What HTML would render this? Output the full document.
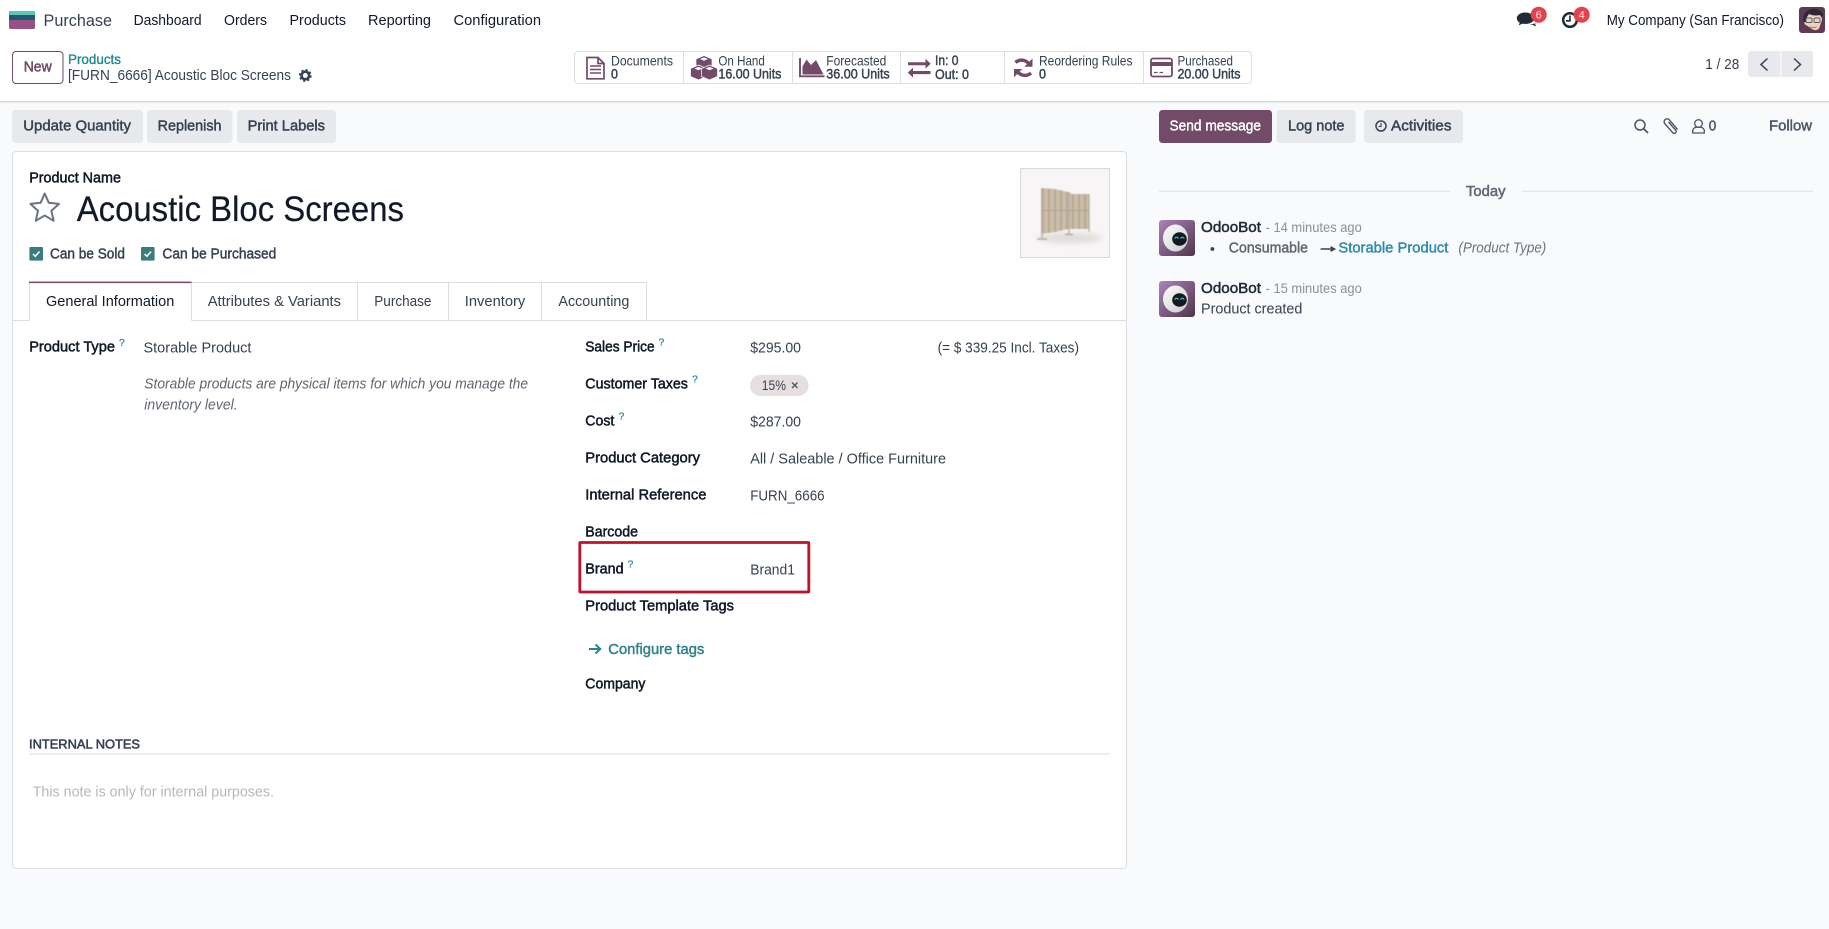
<!DOCTYPE html>
<html lang="en"><head><meta charset="utf-8"><title>Acoustic Bloc Screens</title>
<style>
html,body{margin:0;padding:0;width:1829px;height:929px;overflow:hidden;background:#f9fafb}
svg{display:block}
text{font-family:"Liberation Sans",sans-serif;font-size:14.8px;fill:#374151;white-space:pre}
.m{stroke:#374151;stroke-width:.45px}
.k{fill:#111827}
.km{fill:#111827;stroke:#111827;stroke-width:.5px}
.s{font-size:13.8px}
.p{fill:#714B67}
.q{font-size:10.5px;fill:#2f8a9c;stroke:#2f8a9c;stroke-width:.25px}
.t{fill:#1f8a8e;stroke:#1f8a8e;stroke-width:.35px}
.g{fill:#8b9097}
</style></head><body>
<svg width="1829" height="929" viewBox="0 0 1829 929" xmlns="http://www.w3.org/2000/svg">
<defs>
<linearGradient id="av" x1="0" y1="0" x2="1" y2="1"><stop offset="0" stop-color="#ab84bd"/><stop offset="1" stop-color="#50354a"/></linearGradient>
<linearGradient id="head" x1="0" y1="0" x2="1" y2="1"><stop offset="0" stop-color="#fff"/><stop offset="1" stop-color="#c9c9c9"/></linearGradient>
<pattern id="slat" width="6" height="10" patternUnits="userSpaceOnUse"><rect width="6" height="10" fill="#cbbda9"/><rect x="4" width="2" height="10" fill="#b8a994"/></pattern>
<filter id="b1" x="-20%" y="-20%" width="140%" height="140%"><feGaussianBlur stdDeviation=".55"/></filter>
<filter id="b2" x="-30%" y="-100%" width="160%" height="300%"><feGaussianBlur stdDeviation="3"/></filter>
<filter id="b3" x="-20%" y="-20%" width="140%" height="140%"><feGaussianBlur stdDeviation=".35"/></filter>
</defs>

<!-- top area -->
<rect width="1829" height="101" fill="#fff"/>
<rect y="101" width="1829" height="1.5" fill="#d8dadd"/>

<!-- logo -->
<rect x="9" y="11" width="26" height="18" rx="1.5" fill="#985184"/>
<path d="M9 12.5a1.500 1.500 0 0 1 1.500-1.500h23a1.500 1.500 0 0 1 1.500 1.500V15H9z" fill="#5cc8b4"/>
<rect x="9" y="15" width="26" height="5" fill="#1f5a72"/>

<text x="43.5" y="25.8" style="font-size:16.5px" textLength="68.5" lengthAdjust="spacingAndGlyphs">Purchase</text>
<text class="k" x="133.6" y="25" textLength="68" lengthAdjust="spacingAndGlyphs">Dashboard</text>
<text class="k" x="224" y="25" textLength="43" lengthAdjust="spacingAndGlyphs">Orders</text>
<text class="k" x="289.5" y="25" textLength="56.5" lengthAdjust="spacingAndGlyphs">Products</text>
<text class="k" x="368" y="25" textLength="63" lengthAdjust="spacingAndGlyphs">Reporting</text>
<text class="k" x="453.5" y="25" textLength="87.5" lengthAdjust="spacingAndGlyphs">Configuration</text>

<!-- systray -->
<path d="M1525.500 12.500c-4.800 0-8.700 2.500-8.700 5.700 0 1.900 1.200 3.400 3 4.500l-1.100 2.700 3.700-1.800c1 .2 2 .3 3.100.3 4.800 0 8.700-2.500 8.700-5.700s-3.900-5.700-8.700-5.700z" fill="#1f2937"/>
<path d="M1530 24.700c1.100.3 2.100.4 3.100.3l2.900 1.500-.9-2.700c.6-.4 1.100-1 1.400-1.500-1.500 1.400-3.800 2.200-6.500 2.400z" fill="#1f2937"/>
<circle cx="1538.700" cy="14.700" r="8" fill="#e4404e"/>
<text x="1538.700" y="18.600" text-anchor="middle" style="font-size:11px;fill:#fde8ea">6</text>
<circle cx="1570" cy="20" r="6.800" fill="#fff" stroke="#1f2937" stroke-width="2.500"/>
<path d="M1570 15.500V20.800H1566" fill="none" stroke="#1f2937" stroke-width="1.600"/>
<circle cx="1581.700" cy="14.700" r="8" fill="#e4404e"/>
<text x="1581.700" y="18.600" text-anchor="middle" style="font-size:11px;fill:#fde8ea">4</text>
<text class="k" x="1606.700" y="25" textLength="177.300" lengthAdjust="spacingAndGlyphs">My Company (San Francisco)</text>
<!-- user avatar -->
<rect x="1799" y="7" width="26" height="26" rx="3" fill="#5f3a56"/>
<g filter="url(#b3)">
<path d="M1804.500 24c-.5-7 2-12 8.500-13 5.500-1 9 2.500 9 9l-3 8.500c-2 2-5 2-7 .5z" fill="#f0d2b8"/>
<path d="M1803.500 22c-1.500-8 3-12.500 9-13 5.500-.5 10 2 10.500 6l-1.500 2.500-1.500-2.500c-4 .8-8 .6-11-1l-2 3-1 5z" fill="#2b2c33"/>
<rect x="1806" y="18" width="6" height="4.500" rx="1" fill="#d5d7d2" stroke="#5a5a5a" stroke-width=".9"/>
<rect x="1814" y="18" width="6" height="4.500" rx="1" fill="#d5d7d2" stroke="#5a5a5a" stroke-width=".9"/>
<path d="M1810 26.800q3.500 1.700 6.500 0" fill="none" stroke="#a8705f" stroke-width=".9"/>
</g>

<!-- breadcrumb row -->
<rect x="12.500" y="51.500" width="50.500" height="32" rx="3.500" fill="#fff" stroke="#714B67"/>
<text class="p" x="23.700" y="71.500" textLength="28" lengthAdjust="spacingAndGlyphs" style="stroke:#714B67;stroke-width:.5px">New</text>
<text class="t s" x="68" y="64" textLength="53" lengthAdjust="spacingAndGlyphs">Products</text>
<text x="68" y="80" textLength="223" lengthAdjust="spacingAndGlyphs">[FURN_6666] Acoustic Bloc Screens</text>
<circle cx="305.300" cy="75.500" r="3.800" fill="none" stroke="#374151" stroke-width="2.600"/>
<circle cx="305.300" cy="75.500" r="5.500" fill="none" stroke="#374151" stroke-width="1.800" stroke-dasharray="2.200 2.120"/>

<!-- stat buttons -->
<rect x="574.500" y="51.500" width="677" height="32" rx="3.500" fill="#fff" stroke="#dcdee1"/>
<path d="M683.500 52V83M792.500 52V83M900.500 52V83M1004.500 52V83M1143.500 52V83" stroke="#dcdee1"/>
<text class="s" x="611" y="65.500" textLength="62" lengthAdjust="spacingAndGlyphs">Documents</text>
<text class="s m" x="611" y="78.700" textLength="7" lengthAdjust="spacingAndGlyphs">0</text>
<text class="s" x="718.400" y="65.500" textLength="46.400" lengthAdjust="spacingAndGlyphs">On Hand</text>
<text class="s m" x="718.400" y="78.700" textLength="63" lengthAdjust="spacingAndGlyphs">16.00 Units</text>
<text class="s" x="826.300" y="65.500" textLength="60" lengthAdjust="spacingAndGlyphs">Forecasted</text>
<text class="s m" x="826.300" y="78.700" textLength="63.400" lengthAdjust="spacingAndGlyphs">36.00 Units</text>
<text class="s m" x="935" y="65" textLength="23.500" lengthAdjust="spacingAndGlyphs">In: 0</text>
<text class="s m" x="935" y="79" textLength="34" lengthAdjust="spacingAndGlyphs">Out: 0</text>
<text class="s" x="1039" y="65.500" textLength="93.500" lengthAdjust="spacingAndGlyphs">Reordering Rules</text>
<text class="s m" x="1039" y="78.700" textLength="7" lengthAdjust="spacingAndGlyphs">0</text>
<text class="s" x="1177.500" y="65.500" textLength="55.500" lengthAdjust="spacingAndGlyphs">Purchased</text>
<text class="s m" x="1177.500" y="78.700" textLength="63" lengthAdjust="spacingAndGlyphs">20.00 Units</text>
<!-- doc -->
<path d="M587 57.500H598L604 63.500V78.800H587zM598 57.500V63.500H604" fill="none" stroke="#714B67" stroke-width="1.700"/>
<path d="M590 66H601M590 69.500H601M590 73H601" stroke="#714B67" stroke-width="1.600"/>
<!-- cubes -->
<g fill="#714B67" stroke="#fff" stroke-width=".7">
<path d="M704 55.500L712 59V67L704 70.500L696 67V59z"/>
<path d="M698.500 65L706.500 68.500V76.500L698.500 80L690.500 76.500V68.500z"/>
<path d="M709.500 65L717.500 68.500V76.500L709.500 80L701.500 76.500V68.500z"/>
</g>
<path d="M700 59L704 57.400L708 59L704 60.700z M694.500 68.500L698.500 66.900L702.500 68.500L698.500 70.200z M705.500 68.500L709.500 66.900L713.500 68.500L709.500 70.200z" fill="#fff"/>
<!-- area chart -->
<path d="M800 58V76.300H824.500" fill="none" stroke="#714B67" stroke-width="1.900"/>
<path d="M802.500 74.500V66.500L806.500 59.500L811 65L816 60L823.500 74.500z" fill="#714B67"/>
<!-- exchange -->
<path d="M908 62.200H925.500V58.800L930.700 63.700L925.500 68.600V65.300H908z" fill="#714B67"/>
<path d="M930.500 71H913V67.700L907.800 72.600L913 77.500V74.100H930.500z" fill="#714B67"/>
<!-- refresh -->
<path d="M1030 66A9 9 0 0 0 1015.500 62.500" fill="none" stroke="#714B67" stroke-width="3.400"/>
<path d="M1032.500 58.500V66.800H1024.300z" fill="#714B67"/>
<path d="M1016.500 69.500A9 9 0 0 0 1031 73" fill="none" stroke="#714B67" stroke-width="3.400"/>
<path d="M1014 77.200V69H1022.200z" fill="#714B67"/>
<!-- card -->
<rect x="1151" y="58.500" width="21" height="18" rx="2" fill="none" stroke="#714B67" stroke-width="1.800"/>
<rect x="1151" y="62" width="21" height="4" fill="#714B67"/>
<path d="M1154 72.500H1157.500M1159.500 72.500H1163" stroke="#714B67" stroke-width="1.300"/>

<!-- pager -->
<text x="1705.300" y="69" textLength="34" lengthAdjust="spacingAndGlyphs">1 / 28</text>
<path d="M1751 51H1780.300V77H1751a3 3 0 0 1-3-3V54a3 3 0 0 1 3-3z" fill="#e7e9ed"/>
<path d="M1781.300 51H1810a3 3 0 0 1 3 3V74a3 3 0 0 1-3 3H1781.300z" fill="#e7e9ed"/>
<path d="M1767.500 58.500L1761 64.500L1767.500 70.500M1794 58.500L1800.500 64.500L1794 70.500" fill="none" stroke="#374151" stroke-width="1.500"/>

<!-- action buttons -->
<rect x="12" y="110" width="131" height="33" rx="3.500" fill="#e7e9ed"/>
<rect x="147" y="110" width="85.500" height="33" rx="3.500" fill="#e7e9ed"/>
<rect x="237" y="110" width="99" height="33" rx="3.500" fill="#e7e9ed"/>
<text class="m" x="23.300" y="130.700" textLength="107.700" lengthAdjust="spacingAndGlyphs">Update Quantity</text>
<text class="m" x="157.600" y="130.700" textLength="63.900" lengthAdjust="spacingAndGlyphs">Replenish</text>
<text class="m" x="247.600" y="130.700" textLength="77.400" lengthAdjust="spacingAndGlyphs">Print Labels</text>

<!-- form card -->
<rect x="12.500" y="151.500" width="1114" height="717" rx="3.500" fill="#fff" stroke="#dcdee1"/>
<text class="km" x="29.200" y="182.700" textLength="91.800" lengthAdjust="spacingAndGlyphs">Product Name</text>
<path d="M44.700 193.500L48.800 202.800L59 203.900L51.400 210.700L53.600 220.800L44.700 215.500L35.800 220.800L38 210.700L30.400 203.900L40.600 202.800z" fill="none" stroke="#6b7280" stroke-width="2" stroke-linejoin="round"/>
<text class="k" x="76.700" y="221" style="font-size:35px;stroke:#111827;stroke-width:.2px" textLength="327.300" lengthAdjust="spacingAndGlyphs">Acoustic Bloc Screens</text>

<rect x="29.400" y="247" width="13.600" height="13.600" rx="1" fill="#3a7d80"/>
<path d="M33 254L35.300 256.300L39.500 251.500" fill="none" stroke="#fff" stroke-width="1.500"/>
<rect x="141" y="247" width="13.600" height="13.600" rx="1" fill="#3a7d80"/>
<path d="M144.600 254L146.900 256.300L151.100 251.500" fill="none" stroke="#fff" stroke-width="1.500"/>
<text class="m" x="50" y="258.600" textLength="75" lengthAdjust="spacingAndGlyphs">Can be Sold</text>
<text class="m" x="162.400" y="258.600" textLength="113.900" lengthAdjust="spacingAndGlyphs">Can be Purchased</text>

<!-- tabs -->
<path d="M12.500 320.500H29.500M191.500 320.500H1127M191 282.500H646M29.500 282V320.500M191.500 282V320.500M357.500 282V320.500M448.500 282V320.500M541.500 282V320.500M646.500 282V320.500" fill="none" stroke="#dcdee1"/>
<rect x="29" y="281.600" width="162.500" height="1.500" fill="#714B67"/>
<text class="k" x="46" y="305.800" textLength="128.300" lengthAdjust="spacingAndGlyphs">General Information</text>
<text x="207.700" y="305.800" textLength="133.300" lengthAdjust="spacingAndGlyphs">Attributes &amp; Variants</text>
<text x="374.300" y="305.800" textLength="57.100" lengthAdjust="spacingAndGlyphs">Purchase</text>
<text x="464.800" y="305.800" textLength="60.500" lengthAdjust="spacingAndGlyphs">Inventory</text>
<text x="558.400" y="305.800" textLength="71" lengthAdjust="spacingAndGlyphs">Accounting</text>

<!-- left column -->
<text class="km" x="29.200" y="351.500" textLength="85.800" lengthAdjust="spacingAndGlyphs">Product Type</text>
<text class="q" x="119" y="346">?</text>
<text x="143.500" y="352.500" textLength="107.900" lengthAdjust="spacingAndGlyphs">Storable Product</text>
<text x="144.300" y="388.600" style="font-style:italic;fill:#5f6670" textLength="383.700" lengthAdjust="spacingAndGlyphs">Storable products are physical items for which you manage the</text>
<text x="144.300" y="409.600" style="font-style:italic;fill:#5f6670" textLength="93.300" lengthAdjust="spacingAndGlyphs">inventory level.</text>

<!-- right column -->
<text class="km" x="585.300" y="351.700" textLength="69.300" lengthAdjust="spacingAndGlyphs">Sales Price</text>
<text class="q" x="658.500" y="345.500">?</text>
<text x="750.200" y="352.500" textLength="50.800" lengthAdjust="spacingAndGlyphs">$295.00</text>
<text x="937.600" y="352.500" textLength="141.400" lengthAdjust="spacingAndGlyphs">(= $ 339.25 Incl. Taxes)</text>

<text class="km" x="585.300" y="388.600" textLength="102.600" lengthAdjust="spacingAndGlyphs">Customer Taxes</text>
<text class="q" x="692" y="382.500">?</text>
<rect x="750" y="375" width="58.600" height="21" rx="10.500" fill="#e6dfdf"/>
<text x="761.800" y="390" style="font-size:13.800px" textLength="24.200" lengthAdjust="spacingAndGlyphs">15%</text>
<path d="M792 382.500L797.500 388M797.500 382.500L792 388" stroke="#4b5563" stroke-width="1.300"/>

<text class="km" x="585.300" y="425.600" textLength="29" lengthAdjust="spacingAndGlyphs">Cost</text>
<text class="q" x="618.500" y="419.500">?</text>
<text x="750.200" y="426.600" textLength="50.800" lengthAdjust="spacingAndGlyphs">$287.00</text>

<text class="km" x="585.300" y="462.600" textLength="114.700" lengthAdjust="spacingAndGlyphs">Product Category</text>
<text x="750.200" y="463.500" textLength="195.800" lengthAdjust="spacingAndGlyphs">All / Saleable / Office Furniture</text>

<text class="km" x="585.300" y="499.600" textLength="121.100" lengthAdjust="spacingAndGlyphs">Internal Reference</text>
<text x="750.200" y="500.500" textLength="74.400" lengthAdjust="spacingAndGlyphs">FURN_6666</text>

<text class="km" x="585.300" y="536.500" textLength="52.700" lengthAdjust="spacingAndGlyphs">Barcode</text>

<rect x="579.800" y="542.500" width="229" height="49.500" rx=".5" fill="none" stroke="#c40f2a" stroke-width="2.800"/>
<text class="km" x="585.300" y="573.600" textLength="38.300" lengthAdjust="spacingAndGlyphs">Brand</text>
<text class="q" x="627.500" y="567.500">?</text>
<text x="750.200" y="574.500" textLength="44.800" lengthAdjust="spacingAndGlyphs">Brand1</text>

<text class="km" x="585.300" y="610.600" textLength="148.700" lengthAdjust="spacingAndGlyphs">Product Template Tags</text>

<path d="M589 649H600M595.500 644.500L600.300 649L595.500 653.500" fill="none" stroke="#2d8288" stroke-width="2"/>
<text x="608.300" y="654" textLength="96" lengthAdjust="spacingAndGlyphs" style="fill:#2d8288;stroke:#2d8288;stroke-width:.45px">Configure tags</text>

<text class="km" x="585.300" y="688.700" textLength="60.100" lengthAdjust="spacingAndGlyphs">Company</text>

<!-- notes -->
<text x="29" y="748.700" style="font-size:13px;fill:#374151;stroke:#374151;stroke-width:.55px" textLength="111" lengthAdjust="spacingAndGlyphs">INTERNAL NOTES</text>
<rect x="29" y="753.500" width="1081" height="1" fill="#dcdee1"/>
<text x="32.700" y="796.700" style="fill:#b4b8bd" textLength="241.300" lengthAdjust="spacingAndGlyphs">This note is only for internal purposes.</text>

<!-- product image -->
<rect x="1020.500" y="168.500" width="89" height="89" fill="#f7f5f5" stroke="#d8dadd"/>
<ellipse cx="1070" cy="238" rx="32" ry="5" fill="#dfdcd9" filter="url(#b2)"/>
<g filter="url(#b1)">
<path d="M1041 188L1055 189L1068 192V229L1055 232L1041 234z" fill="url(#slat)"/>
<path d="M1068 192L1072 194L1089 194V229L1072 229L1068 229z" fill="url(#slat)"/>
<path d="M1041 210.500L1089 210.500" stroke="#b0a28e" stroke-width="1"/>
<path d="M1042 188V238M1069 192V234M1089 194V232" stroke="#b3afa6" stroke-width="1.300"/>
<path d="M1037 239H1047M1065 234.500H1073" stroke="#b3afa6" stroke-width="1.500"/>
</g>

<!-- chatter -->
<rect x="1159" y="110" width="113" height="33" rx="3.500" fill="#714B67"/>
<text x="1169.500" y="130.700" style="fill:#fff;stroke:#fff;stroke-width:.4px" textLength="91.500" lengthAdjust="spacingAndGlyphs">Send message</text>
<rect x="1276.500" y="110" width="79.200" height="33" rx="3.500" fill="#e7e9ed"/>
<text class="m" x="1288" y="130.700" textLength="56.500" lengthAdjust="spacingAndGlyphs">Log note</text>
<rect x="1364" y="110" width="99" height="33" rx="3.500" fill="#e7e9ed"/>
<circle cx="1381" cy="126" r="5" fill="none" stroke="#374151" stroke-width="1.500"/>
<path d="M1381 123V126.500H1378.500" fill="none" stroke="#374151" stroke-width="1.100"/>
<text class="m" x="1391" y="130.700" textLength="60.500" lengthAdjust="spacingAndGlyphs">Activities</text>

<circle cx="1640" cy="125" r="5" fill="none" stroke="#4b5563" stroke-width="1.500"/>
<path d="M1643.700 128.700L1648 133" stroke="#4b5563" stroke-width="1.800"/>
<path d="M1677.500 129.500L1669 119.500a3 3 0 0 0-4.500 3.800L1673 133a2 2 0 0 0 3-2.400L1668.500 122" fill="none" stroke="#4b5563" stroke-width="1.400"/>
<circle cx="1698.500" cy="123.500" r="3.800" fill="none" stroke="#4b5563" stroke-width="1.300"/>
<path d="M1692.700 133V130.500a4 4 0 0 1 4-3.300h3.600a4 4 0 0 1 4 3.300V133z" fill="none" stroke="#4b5563" stroke-width="1.300"/>
<text x="1708.700" y="130.700" textLength="7.500" lengthAdjust="spacingAndGlyphs" style="fill:#4b5563;stroke:#4b5563;stroke-width:.45px">0</text>
<text x="1769" y="130.700" textLength="43" lengthAdjust="spacingAndGlyphs" style="fill:#4b5563;stroke:#4b5563;stroke-width:.45px">Follow</text>

<rect x="1159" y="190.800" width="291" height="1" fill="#dfe1e5"/>
<rect x="1522.500" y="190.800" width="290.500" height="1" fill="#dfe1e5"/>
<text x="1466" y="196" textLength="39.500" lengthAdjust="spacingAndGlyphs" style="fill:#5f6670;stroke:#5f6670;stroke-width:.5px">Today</text>

<!-- message 1 -->
<rect x="1159" y="220" width="36" height="36" rx="3" fill="url(#av)"/>
<ellipse cx="1175.500" cy="238" rx="12.500" ry="13.500" fill="url(#head)"/>
<ellipse cx="1179.500" cy="239" rx="7.300" ry="6.800" fill="#14181f"/>
<path d="M1175 238.800a1.600 1.600 0 0 1 3.200 0M1180.800 238.800a1.600 1.600 0 0 1 3.200 0" fill="none" stroke="#3fc4c4" stroke-width="1.200"/>
<text class="km" x="1201" y="232" textLength="60" lengthAdjust="spacingAndGlyphs" style="fill:#1f2937;stroke:#1f2937">OdooBot</text>
<text class="g" x="1265.600" y="232" style="font-size:13.800px" textLength="96.200" lengthAdjust="spacingAndGlyphs">- 14 minutes ago</text>
<circle cx="1212.400" cy="249" r="1.900" fill="#374151"/>
<text x="1228.800" y="252.500" textLength="79.200" lengthAdjust="spacingAndGlyphs" style="fill:#5f6670;stroke:#5f6670;stroke-width:.45px">Consumable</text>
<path d="M1320.600 249H1333M1330.500 246.800L1334.500 249L1330.500 251.200" fill="none" stroke="#374151" stroke-width="1.500"/>
<text x="1338.400" y="252.500" textLength="110" lengthAdjust="spacingAndGlyphs" style="fill:#2e8bab;stroke:#2e8bab;stroke-width:.45px">Storable Product</text>
<text x="1458.400" y="252.500" textLength="87.900" lengthAdjust="spacingAndGlyphs" style="font-style:italic;fill:#6b7280">(Product Type)</text>

<!-- message 2 -->
<rect x="1159" y="281" width="36" height="36" rx="3" fill="url(#av)"/>
<ellipse cx="1175.500" cy="299" rx="12.500" ry="13.500" fill="url(#head)"/>
<ellipse cx="1179.500" cy="300" rx="7.300" ry="6.800" fill="#14181f"/>
<path d="M1175 299.800a1.600 1.600 0 0 1 3.200 0M1180.800 299.800a1.600 1.600 0 0 1 3.200 0" fill="none" stroke="#3fc4c4" stroke-width="1.200"/>
<text class="km" x="1201" y="293" textLength="60" lengthAdjust="spacingAndGlyphs" style="fill:#1f2937;stroke:#1f2937">OdooBot</text>
<text class="g" x="1265.600" y="293" style="font-size:13.800px" textLength="96.200" lengthAdjust="spacingAndGlyphs">- 15 minutes ago</text>
<text x="1201" y="313.500" textLength="101.400" lengthAdjust="spacingAndGlyphs">Product created</text>
</svg>
</body></html>
